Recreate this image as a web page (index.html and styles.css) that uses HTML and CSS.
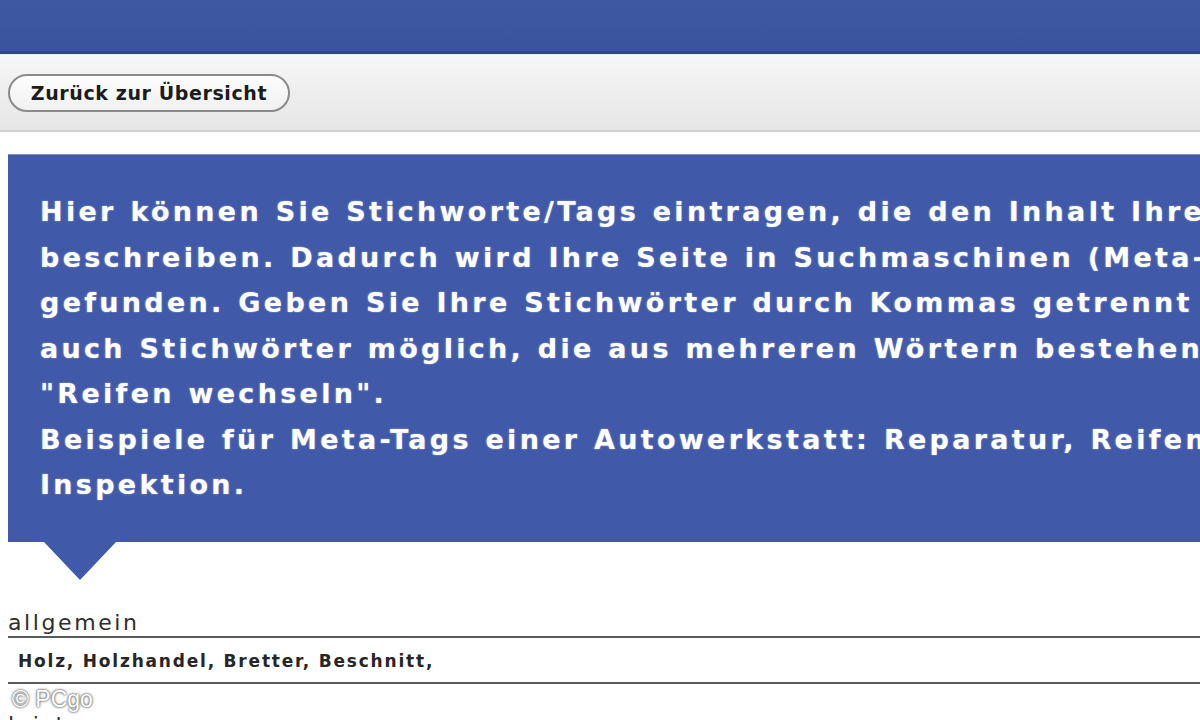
FILE: index.html
```html
<!DOCTYPE html>
<html lang="de">
<head>
  <meta charset="UTF-8" />
  <meta name="viewport" content="width=device-width, initial-scale=1.0"/>
  <title>Meta-Tags bearbeiten</title>
  <link rel="stylesheet" href="styles.css">
</head>
<body>
  <header class="topbar"></header>

  <div class="toolbar">
    <button class="back-btn">Zurück zur Übersicht</button>
  </div>

  <main>
    <!-- Hinweis-Box -->
    <section class="hint">
      <p>
        Hier können Sie Stichworte/Tags eintragen, die den Inhalt Ihrer Seite<br>
        beschreiben. Dadurch wird Ihre Seite in Suchmaschinen (Meta-Tags) besser<br>
        gefunden. Geben Sie Ihre Stichwörter durch Kommas getrennt ein. Es sind<br>
        auch Stichwörter möglich, die aus mehreren Wörtern bestehen, z.B.<br>
        "Reifen wechseln".<br>
        Beispiele für Meta-Tags einer Autowerkstatt: Reparatur, Reifen, Öl,<br>
        Inspektion.
      </p>
    </section>
    <div class="hint-arrow"></div>

    <!-- Felder -->
    <div class="field">
      <label class="field-label">allgemein</label>
      <div class="field-value">Holz, Holzhandel, Bretter, Beschnitt,</div>
    </div>
    <div class="field">
      <label class="field-label">leistungen</label>
    </div>
  </main>

  <div class="watermark">&copy; PCgo</div>
</body>
</html>
```

FILE: styles.css
```css
html, body {
  margin: 0;
  padding: 0;
  width: 1200px;
  height: 720px;
  overflow: hidden;
  background: #fff;
  font-family: "DejaVu Sans", Verdana, sans-serif;
}

.topbar {
  height: 51px;
  background: linear-gradient(#3e58a2, #3a549c);
  border-bottom: 3px solid #2f4684;
}

.toolbar {
  height: 75px;
  border-top: 1px solid #e6eef4;
  border-bottom: 2px solid #d2d2d2;
  background: linear-gradient(#f6f6f6, #e6e6e6);
  padding: 0 8px;
  display: flex;
  align-items: center;
}

.back-btn {
  font-family: "DejaVu Sans", Verdana, sans-serif;
  font-size: 19px;
  font-weight: bold;
  letter-spacing: 0.6px;
  color: #1c1c1c;
  background: linear-gradient(#fdfdfd, #f0f0f0);
  border: 2px solid #8a8a8a;
  border-radius: 20px;
  height: 38px;
  width: 282px;
  padding: 0;
}

main {
  padding: 22px 0 0 8px;
}

.hint {
  width: 1400px;
  background: #4059a8;
  border-top: 1px solid #7d8fc6;
  color: #fff;
  padding: 34px 0 24px 32px;
  box-sizing: border-box;
  height: 388px;
}

.hint p {
  margin: 0;
  font-size: 27px;
  font-weight: bold;
  line-height: 45.5px;
  white-space: nowrap;
  letter-spacing: 3.3px;
  word-spacing: 1px;
  text-shadow: 0 0 2px rgba(220, 230, 255, 0.6);
}

.hint-arrow {
  width: 0;
  height: 0;
  margin-left: 36px;
  border-left: 36px solid transparent;
  border-right: 36px solid transparent;
  border-top: 38px solid #4059a8;
}

.field {
  margin-top: 30px;
}

.field + .field {
  margin-top: 28px;
}

.field-label {
  display: block;
  font-size: 22px;
  letter-spacing: 2.6px;
  color: #2e2e2e;
  line-height: 26px;
  border-bottom: 2px solid #5a5a5a;
}

.field-value {
  font-size: 17px;
  font-weight: bold;
  letter-spacing: 1.8px;
  color: #262626;
  padding: 13px 10px 0;
  height: 46px;
  box-sizing: border-box;
  border-bottom: 2px solid #5a5a5a;
}

.watermark {
  position: absolute;
  left: 12px;
  top: 686px;
  font-family: "Liberation Sans", Arial, sans-serif;
  font-size: 23px;
  color: #fff;
  text-shadow: 0 0 2px #555, 0 0 3px #666;
}
```
